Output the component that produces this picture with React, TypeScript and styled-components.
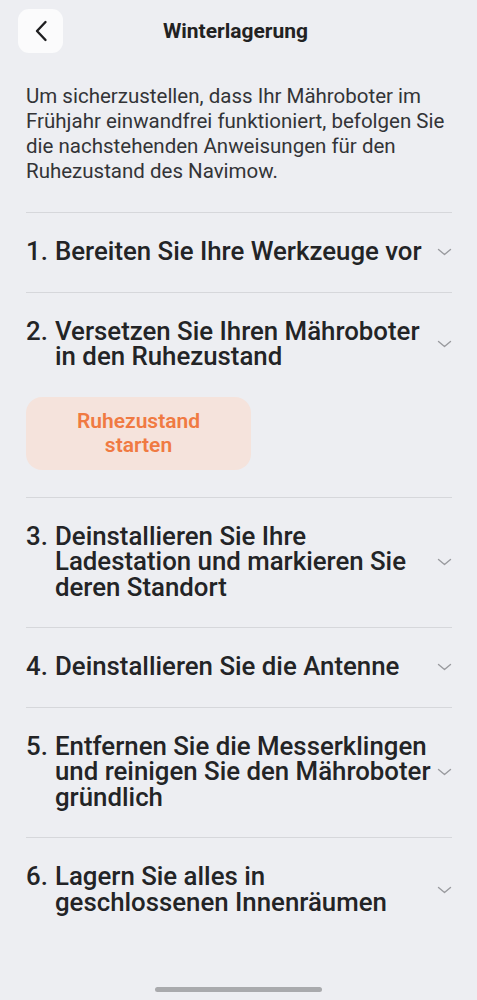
import React from "react";
import styled, { createGlobalStyle } from "styled-components";

const Global = createGlobalStyle`
  html, body { margin: 0; padding: 0; background: #edeef2; }
  body { font-family: Roboto, "Noto Sans", sans-serif; -webkit-font-smoothing: antialiased; }
  * { box-sizing: border-box; }
`;

const Page = styled.div`
  width: 477px;
  height: 1000px;
  background: #edeef2;
  display: flex;
  flex-direction: column;
  position: relative;
`;

const Header = styled.header`
  height: 53px;
  padding: 9px 18px 0;
  display: grid;
  grid-template-columns: 45px 1fr 45px;
  align-items: start;
`;

const BackButton = styled.button`
  width: 45px;
  height: 44px;
  border: none;
  border-radius: 11px;
  background: #fbfbfc;
  display: flex;
  align-items: center;
  justify-content: center;
  padding: 0;
`;

const Title = styled.h1`
  margin: 0 6px 0 0;
  font-size: 21px;
  font-weight: 700;
  color: #222;
  text-align: center;
  line-height: 44px;
`;

const Content = styled.main`
  padding: 0 25px 0 26px;
`;

const Intro = styled.p`
  margin: 31px 0 0;
  font-size: 20.5px;
  line-height: 25px;
  color: #333437;
  padding-bottom: 28px;
  border-bottom: 1px solid #d6d7db;
`;

const Section = styled.section<{ $last?: boolean }>`
  padding: 26px 0 27px;
  border-bottom: ${(p) => (p.$last ? "none" : "1px solid #d6d7db")};
`;

const Row = styled.div`
  display: flex;
  align-items: center;
  gap: 3px;
`;

const Heading = styled.div`
  flex: 1;
  display: flex;
  font-size: 25.8px;
  font-weight: 500;
  line-height: 25.5px;
  color: #232426;
`;

const Num = styled.span`
  flex: 0 0 auto;
  width: 29px;
  white-space: nowrap;
`;

const HeadText = styled.span`
  flex: 1;
`;

const Chevron = styled.svg`
  flex: 0 0 auto;
  width: 15px;
  height: 10px;
`;

const ActionButton = styled.button`
  margin-top: 27px;
  width: 225px;
  height: 73px;
  border: none;
  border-radius: 16px;
  background: #f5e3dc;
  color: #f07a42;
  font-family: Roboto, "Noto Sans", sans-serif;
  font-size: 21px;
  font-weight: 600;
  line-height: 24px;
  padding: 0 30px;
`;

const HomeBar = styled.div`
  position: absolute;
  left: 155px;
  bottom: 8px;
  width: 167px;
  height: 5px;
  border-radius: 3px;
  background: #a9aaad;
`;

const items: { n: string; t: string; action?: boolean }[] = [
  { n: "1.", t: "Bereiten Sie Ihre Werkzeuge vor" },
  { n: "2.", t: "Versetzen Sie Ihren Mähroboter in den Ruhezustand", action: true },
  { n: "3.", t: "Deinstallieren Sie Ihre Ladestation und markieren Sie deren Standort" },
  { n: "4.", t: "Deinstallieren Sie die Antenne" },
  { n: "5.", t: "Entfernen Sie die Messerklingen und reinigen Sie den Mähroboter gründlich" },
  { n: "6.", t: "Lagern Sie alles in geschlossenen Innenräumen" },
];

export default function App() {
  return (
    <Page>
      <Global />
      <Header>
        <BackButton aria-label="Zurück">
          <svg width="14" height="22" viewBox="0 0 14 22" fill="none">
            <path d="M11.5 2 L3 11 L11.5 20" stroke="#1e1e20" strokeWidth="2.4" strokeLinecap="round" strokeLinejoin="round" />
          </svg>
        </BackButton>
        <Title>Winterlagerung</Title>
        <div />
      </Header>
      <Content>
        <Intro>
          Um sicherzustellen, dass Ihr Mähroboter im Frühjahr einwandfrei funktioniert, befolgen Sie die nachstehenden Anweisungen für den Ruhezustand des Navimow.
        </Intro>
        {items.map((it, i) => (
          <Section key={it.n} $last={i === items.length - 1}>
            <Row>
              <Heading>
                <Num>{it.n}</Num>
                <HeadText>{it.t}</HeadText>
              </Heading>
              <Chevron viewBox="0 0 15 10" fill="none">
                <path d="M1.5 2.5 L7.5 7.5 L13.5 2.5" stroke="#9a9b9f" strokeWidth="1.4" strokeLinecap="round" strokeLinejoin="round" />
              </Chevron>
            </Row>
            {it.action && <ActionButton>Ruhezustand starten</ActionButton>}
          </Section>
        ))}
      </Content>
      <HomeBar />
    </Page>
  );
}
